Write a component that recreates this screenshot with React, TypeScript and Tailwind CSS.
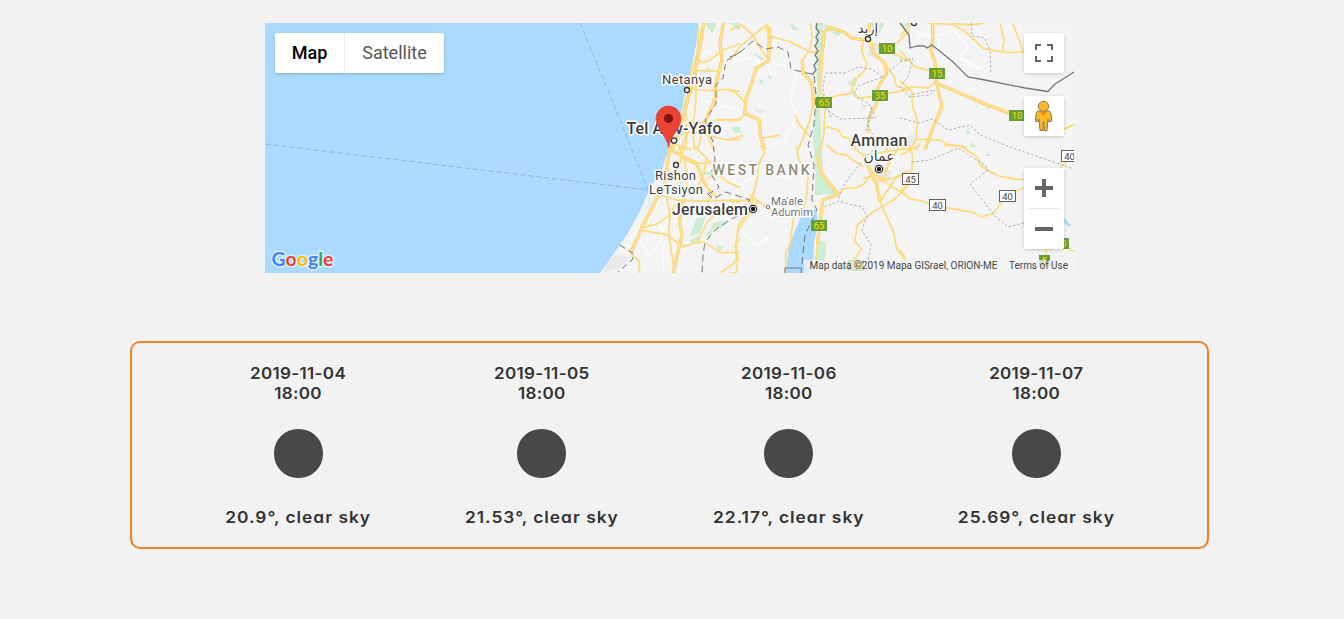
import React from "react";

const roadPaths = {
  nw: [
    "M432 0L425 60L408 130L400 200L378 250L362 300L352 350L336 390",
    "M416 20L412 100L392 160L386 210L372 265",
    "M492 0L482 60L486 110L470 170L468 220L448 280L430 330L412 390",
    "M540 72L492 88L450 120L428 128L412 116",
    "M410 152L470 153 M385 205L440 212L500 208L540 214",
    "M540 298L470 300L430 310L370 300 M350 330L440 345L500 360L540 358",
    "M408 160L408 240L398 330L404 390 M372 265L385 310L376 390 M352 350L400 330L440 300",
    "M432 320L450 360L462 390",
    "M345 372L395 390 M378 310L380 345L360 390 M365 325L430 318",
  ],
  sw: [
    "M330 0L322 60L314 120L290 160L270 200L245 250L212 324",
    "M325 10L370 40L410 60L425 95L440 125L470 155",
    "M355 0L376 60L380 120L362 180L358 230L366 270L352 330L340 384",
    "M300 150L350 165L420 168L500 166L540 172",
    "M245 248L290 238L325 214L345 180",
    "M248 256L320 270L370 305L410 292L430 290L480 322L540 322",
    "M320 160L330 210L326 270L336 330L342 370",
    "M440 40L478 92L510 115L540 128 M400 0L440 40L430 90L412 130",
    "M372 0L360 55 M410 55L470 55 M440 100L490 80 M212 324L238 350L238 384",
    "M470 200L440 235L410 292 M540 280L525 300L535 345L480 384",
    "M440 125L455 150L440 175",
  ],
  mid: [
    "M118 0L108 30L124 50L116 122L78 146L62 200L48 235L44 280L88 300L92 350L105 390",
    "M240 0L247 50L238 92L216 120L220 160L246 190L252 240L240 300L205 390",
    "M285 30L275 110L270 200L285 250L282 340L272 390",
    "M278 38L300 22L345 38L365 55L410 60L470 90L510 110L540 125",
    "M418 0L418 55L430 100L465 130L470 160L445 200L440 250L414 300L416 340",
    "M0 122L30 80L70 46L108 15 M70 46L95 92L116 120 M124 50L180 65L240 96L270 96",
    "M48 250L20 220L0 212 M44 285L25 300L0 302 M196 284L205 310L240 350 M0 358L40 346 M90 356L150 345",
    "M400 62L395 95L410 130L405 150L370 186L364 220L330 225L280 238",
    "M364 205L385 235L440 228L500 215L540 208 M470 140L490 165L500 200L540 208 M500 70L540 30",
    "M288 320L325 330L338 350L370 360L376 390 M0 30L35 15L70 46",
  ],
  midSouth: [
    "M90 0L105 20L85 60L82 100L70 150L62 195L28 235L18 290L20 384L0 384",
    "M200 0L204 40L235 85L230 150L222 190L190 220L180 300L168 320L166 384",
    "M272 0L262 40L278 90L325 148L278 165L272 225L262 300L255 384",
    "M325 148L345 130L380 128L400 118L430 80L460 72",
    "M290 0L320 25L350 30L368 45L400 65 M360 0L400 30L470 20L540 10",
    "M400 30L420 80L440 120L450 170L490 260L500 310L525 345L530 384",
    "M540 115L495 162L430 200L382 240L374 290L395 312L372 345L376 384",
    "M425 90L470 115L540 158 M470 0L475 60L460 105L430 110 M510 0L470 70L440 70 M450 170L500 95L540 75",
    "M400 100L440 90L465 105L540 85 M60 150L100 180L125 195",
    "M0 165L60 168L75 135 M84 165L55 210L20 260",
  ],
  ne: [
    "M0 48L45 0L100 10L160 14L195 34L250 86L320 98L370 96L350 40L338 10",
    "M98 0L98 65L92 90L105 125L110 190L126 260L96 330L75 390",
    "M0 92L45 140L85 152 M110 190L180 220L250 250L330 280L385 290L465 340L522 314",
    "M300 10L312 60L306 98 M160 10L210 15L250 10",
    "M0 212L38 200L85 204L105 185 M0 182L35 212L38 260L52 300L48 360L28 390",
    "M45 358L120 360L150 375L200 382 M60 370L45 390",
  ],
  se: [
    "M30 0L38 35L36 70L30 110L0 140 M0 135L28 160L70 170L110 182L160 192L220 202L245 216L280 205L300 180L325 150L372 128",
    "M130 0L180 2L232 36L240 60L270 80L300 94L345 102L372 104",
    "M480 70L522 25 M465 310L440 310L434 345L420 384 M480 295L522 320",
    "M0 10L40 10 M0 30L20 22L60 0 M0 315L15 335L16 384",
  ],
};

const wide = {
  nw: ["M432 0L420 80L400 180L372 280L336 390", "M492 0L480 70L486 120L466 200L468 230L440 295"],
  sw: ["M330 0L322 60L314 120L290 160L270 200L245 250L212 324", "M325 10L370 35L410 55L425 95L440 125", "M376 130L358 230L366 270L352 330L340 384"],
  mid: ["M285 30L275 110L270 190", "M118 20L116 122L78 146L62 200L48 235L44 280L88 300L92 350L105 390", "M418 0L418 55L430 100L465 130L470 160L445 200L440 250L414 300", "M216 120L220 160L246 190L252 260", "M278 38L300 22L345 38L365 55L410 60"],
  midSouth: ["M262 40L278 90L325 148L278 165L262 300", "M400 30L440 120L450 170"],
  ne: ["M98 0L98 65L92 90L105 125L110 190L126 260L96 330L75 390", "M110 190L180 220L250 250L330 280"],
  se: [] as string[],
};

const tiles = [
  { key: "nw", at: "translate(560 20) scale(.33333)" },
  { key: "sw", at: "translate(560 145) scale(.33333)" },
  { key: "mid", at: "translate(730 20) scale(.33333)" },
  { key: "midSouth", at: "translate(730 145) scale(.33333)" },
  { key: "ne", at: "translate(900 20) scale(.33333)" },
  { key: "se", at: "translate(900 145) scale(.33333)" },
] as const;

function Shield({ x, y, w = 16, n, green = false }: { x: number; y: number; w?: number; n: string; green?: boolean }) {
  return (
    <g>
      <rect
        x={green ? x : x + 0.5}
        y={green ? y : y + 0.5}
        width={w}
        height={11}
        fill={green ? "#689f38" : "#fff"}
        stroke={green ? "none" : "#5f5f5f"}
      />
      <text
        x={x + w / 2 + (green ? 0 : 0.5)}
        y={y + (green ? 9 : 9.5)}
        textAnchor="middle"
        fontSize="9.5"
        fill={green ? "#ffe000" : "#444"}
      >
        {n}
      </text>
    </g>
  );
}

function Terrain() {
  return (
    <svg viewBox="265 23 809 250" width="809" height="250" className="block" fontFamily='Roboto, "Noto Sans", sans-serif'>
      <rect x="265" y="23" width="809" height="250" fill="#aadaff" />
      <path d="M698.5 23L696 45L691 70L687 85L682.5 107L676 130L668 150L662 170L655 180L648 193L641.5 208L628 233L615 252L600 273H1074V23Z" fill="#f4f4f4" />
      <path d="M600 273L614 254L630 257L620 268L603 273Z M650 195L652 203L645 211Z M872 45L882 48L878 58L866 55Z M872 160L892 172L888 182L876 180Z M902 142L914 132L916 140L906 148Z M753 107L768 112L757 113Z" fill="#e9e9e9" />
      <g fill="#cdeed2">
        <path d="M704 23H717L712 33Z M708 66L711 72L705 72Z M729 23H740V31Z M731 127L739 126L742 133H734Z M752 53L764 58L762 61Z M758 82L763 78V85Z M768 75L773 77L769 80Z M815 23H823L822 70L820 110L823 165L816 180L813 140L817 85Z" />
        <path d="M823 23L843 31L838 36L826 29Z M846 84L857 76L856 86Z M861 103L867 106L863 109Z M816 145L823 175L837 194L815 195Z M818 240L826 242L825 262L814 266Z M900 23H911L905 30Z M871 23H885L876 40Z" />
        <path d="M696 219L706 215L700 233L690 237Z M712 223L727 220L722 228L711 229Z M706 234L713 228L710 240Z M688 241L701 235L699 245Z M716 245L724 246L719 252Z M736 258L741 262L733 261Z M704 172H714V175H704Z M984 105L990 104L988 110Z M968 127L970 135L966 134Z M972 142L977 147H970Z M790 23L800 29L793 31Z M962 145L967 147H961Z" />
      </g>
      <path d="M802 214L816 209L818 222L814 243L813 273H786L789 245Z M1064 218L1071 225L1069 227L1062 221Z M988 153L990 156H986Z" fill="#aadaff" />
      <g fill="none" stroke="#fff" strokeWidth="1.2">
        <path d="M731 62L750 58L768 65L772 77 M782 35L768 50L775 63L797 69L790 100L797 115L785 140L760 148 M915 35L930 38L954 30L968 47L960 58L980 68L990 52 M940 52L960 64L979 69 M905 27L940 40L938 62 M651 223L665 220L690 225 M638 239L650 255L660 240L670 210 M661 225L664 273 M722 178L740 185L765 170L790 180 M740 230L758 246L770 235 M698 100L740 110 M690 130L735 125 M700 50L727 60" />
      </g>
      {tiles.map((tile) => (
        <g key={tile.key} transform={tile.at} fill="none" strokeLinejoin="round">
          {roadPaths[tile.key].map((d) => (
            <path key={d} d={d} stroke="#fddc80" strokeWidth="5.4" />
          ))}
          {wide[tile.key].map((d) => (
            <path key={d} d={d} stroke="#f9d16b" strokeWidth="10" />
          ))}
          {wide[tile.key].map((d) => (
            <path key={`${d}-core`} d={d} stroke="#ffe394" strokeWidth="5" />
          ))}
        </g>
      ))}
      <g fill="none" stroke="#75777b">
        <path d="M580 23L612 100L648 190L265 144" stroke="#80b4ec" strokeWidth=".9" strokeDasharray="5 3" />
        <path d="M740 52L726 61L723 78L716 85L716 104L705 120L713 142L715 160L711 174L719 187L707 195 M620 245L634 254L632 260L618 272" strokeDasharray="6 4" />
        <path d="M730 57L738 54L753 41L765 49L778 47L788 52L791 69L806 73L814 74L816 96L814 125L808 145L814 165L812 200L817 210L805 235L801 273" strokeDasharray="7 4" />
        <path d="M740 209L750 200L726 192L713 199L707 193 M748 212L733 218L715 230L705 242L703 255L702 273" strokeDasharray="7 4" />
        <path d="M817 23L816 28L819 32L816 37L818 41L815 46L818 51L815 55L818 60L814 65L816 70L812 75" strokeWidth="1.3" />
        <path d="M900 23L909 35L910 48L917 46L924 46L927 48L932 45L952 61L968 77L985 80L1025 88L1048 91.5L1055 84L1074 72" strokeWidth="1.3" />
        <path d="M785 273V268H801" />
      </g>
      <g fill="none" stroke="#aeb1b2" strokeDasharray="2.5 2">
        <path d="M831 117L825 103L823 85L826 73L845 73L858 67L871 69L883 77L858 86L853 95L869 104L876 118L840 119L825 108 M883 77L900 62L913 58L908 77L900 87L910 97L930 95L935 90L910 95 M866 131L872 106L868 128L880 143L860 164L850 176L841 190L838 202L823 207 M841 202L862 207L867 216L862 230L871 245L866 270" />
        <path d="M900 118L920 123L932 119L948 130L970 125L980 135L1010 147L1074 169 M988 170L970 184L995 216L1008 227L1024 223 M912 162L930 160L958 148L985 165L988 170 M971 23L972 36L985 38L990 52L991 72 M900 60L908 61" />
      </g>
      <g fontSize="14" textAnchor="middle" stroke="#fff" strokeWidth="3" strokeLinejoin="round" paintOrder="stroke" fill="#3c3c3c">
        <text x="687" y="84" fontSize="13" textLength="50">Netanya</text>
        <text x="674" y="134" fontSize="16" fontWeight="500" textLength="95">Tel Aviv-Yafo</text>
        <text x="675.5" y="180" fontSize="13" textLength="41">Rishon</text>
        <text x="676" y="194" fontSize="13" textLength="54">LeTsiyon</text>
        <text x="710" y="215" fontSize="16" fontWeight="500" textLength="76">Jerusalem</text>
        <text x="879" y="146" fontSize="16" fontWeight="500" textLength="57">Amman</text>
        <text x="879" y="161" fontSize="14" fontFamily='"DejaVu Sans", sans-serif'>عمان</text>
        <text x="868" y="33" fontSize="13" fontFamily='"DejaVu Sans", sans-serif'>إربد</text>
        <text x="761" y="175" fontSize="14" fontWeight="500" fill="#918875" textLength="97">WEST BANK</text>
        <text x="787" y="205" fontSize="11.5" fill="#6b6b6b" textLength="32">Ma'ale</text>
        <text x="792" y="216" fontSize="11.5" fill="#6b6b6b" textLength="42">Adumim</text>
      </g>
      <g fill="#fff" stroke="#333" strokeWidth="1.3">
        <circle cx="687" cy="90" r="2.5" />
        <circle cx="674" cy="140.5" r="2.7" />
        <circle cx="676" cy="165" r="2.5" />
        <circle cx="868" cy="39" r="2.5" />
        <circle cx="914" cy="23" r="2.5" />
        <circle cx="768" cy="207" r="1.7" stroke="#777" strokeWidth="1" />
        <circle cx="753" cy="209" r="3.6" />
        <circle cx="879" cy="169" r="3.6" />
      </g>
      <circle cx="753" cy="209" r="2.2" fill="#111" />
      <circle cx="879" cy="169" r="2.2" fill="#111" />
      <Shield x={879} y={43} n="10" green />
      <Shield x={929} y={68} n="15" green />
      <Shield x={872} y={90} n="35" green />
      <Shield x={816} y={97} n="65" green />
      <Shield x={811} y={220} n="65" green />
      <Shield x={1009} y={110} n="10" green />
      <Shield x={1053} y={238} n="10" green />
      <Shield x={1039} y={255} w={11} n="5" green />
      <Shield x={848} y={260} n="65" green />
      <Shield x={902} y={173} n="45" />
      <Shield x={929} y={199} n="40" />
      <Shield x={999} y={190} n="40" />
      <Shield x={1061} y={150} n="40" />
      <path d="M668.5 147.5C667.5 136 656 130 656 118.5A12.5 12.5 0 0 1 681 118.5C681 130 669.5 136 668.5 147.5Z" fill="#ea4335" stroke="#d73a2d" strokeWidth=".6" />
      <circle cx="668.5" cy="118.5" r="4.6" fill="#811411" />
      <text x="271.5" y="266" fontSize="19.5" fontWeight="700" fontFamily="Lato, sans-serif" textLength="62" lengthAdjust="spacingAndGlyphs" stroke="#dbeefd" strokeWidth="3" paintOrder="stroke" strokeLinejoin="round">
        <tspan fill="#4285f4">G</tspan>
        <tspan fill="#ea4335">o</tspan>
        <tspan fill="#fbbc05">o</tspan>
        <tspan fill="#4285f4">g</tspan>
        <tspan fill="#34a853">l</tspan>
        <tspan fill="#ea4335">e</tspan>
      </text>
      <path d="M804 260H1074V273H804Z" fill="#f5f5f5" fillOpacity=".75" />
      <g fontSize="10" fill="#444">
        <text x="809.5" y="269" textLength="188" lengthAdjust="spacingAndGlyphs">Map data ©2019 Mapa GISrael, ORION-ME</text>
        <text x="1009" y="269" textLength="59" lengthAdjust="spacingAndGlyphs">Terms of Use</text>
      </g>
    </svg>
  );
}

const control = "flex w-10 items-center justify-center rounded-[2px] bg-white shadow-[0_1px_4px_-1px_rgba(0,0,0,0.3)]";

function MapControls() {
  return (
    <>
      <div className="absolute top-[10px] left-[10px] flex h-10 rounded-[2px] bg-white font-[Roboto] text-[18px] leading-10 shadow-[0_1px_4px_-1px_rgba(0,0,0,0.3)]">
        <button className="w-[70px] border-r border-[#ececec] text-center font-medium text-black">Map</button>
        <button className="w-[99px] text-center text-[#565656]">Satellite</button>
      </div>
      <div className="absolute top-[10px] right-[10px] flex flex-col">
        <button className={`${control} h-10`} aria-label="Toggle fullscreen">
          <svg width="18" height="18" viewBox="0 0 18 18" fill="none" stroke="#666" strokeWidth="2">
            <path d="M1 6V1H6 M12 1H17V6 M17 12V17H12 M6 17H1V12" />
          </svg>
        </button>
        <button className={`${control} mt-[23px] h-10`} aria-label="Street View">
          <svg width="18" height="32" viewBox="0.5 0 18 32" fill="#fbb829" stroke="#7d6c48" strokeWidth=".9">
            <path d="M4 11H14Q16 11 16.3 13L17.3 21L14.5 22L13.5 19L12.5 30.5H9.5V22H8.5V30.5H5.5L4.5 19L3.5 22L.8 21L1.8 13Q2 11 4 11Z" />
            <circle cx="9" cy="6.3" r="5.1" />
            <path d="M6 11.5H12L9 16.5Z" fill="#e98325" stroke="none" />
          </svg>
        </button>
        <div className={`${control} mt-8 h-[81px] flex-col`}>
          <button className="flex h-10 items-center" aria-label="Zoom in">
            <svg width="18" height="18" viewBox="0 0 18 18"><path d="M7 0H11V7H18V11H11V18H7V11H0V7H7Z" fill="#666" /></svg>
          </button>
          <div className="h-px w-[30px] bg-[#e6e6e6]" />
          <button className="flex h-10 items-center" aria-label="Zoom out">
            <svg width="18" height="18" viewBox="0 0 18 18"><path d="M0 7H18V11H0Z" fill="#666" /></svg>
          </button>
        </div>
      </div>
    </>
  );
}

const forecast = [
  { date: "2019-11-04", text: "20.9°, clear sky", width: "w-[145px]" },
  { date: "2019-11-05", text: "21.53°, clear sky", width: "w-[153px]" },
  { date: "2019-11-06", text: "22.17°, clear sky", width: "w-[153px]" },
  { date: "2019-11-07", text: "25.69°, clear sky", width: "w-[154px]" },
];

export default function App() {
  return (
    <main className="flex h-[619px] flex-col bg-[#f2f2f2] pt-[23px]">
      <section className="relative ml-[265px] h-[250px] w-[809px] overflow-hidden">
        <Terrain />
        <MapControls />
      </section>
      <section className="mt-[68px] ml-[130px] flex h-[208px] w-[1079px] justify-evenly rounded-[10px] border-2 border-[#f48120] pt-5 font-[Inter] text-[16px] leading-5 font-semibold text-[#333] [font-feature-settings:'cv11']">
        {forecast.map((day) => (
          <article key={day.date} className={`${day.width} flex flex-col items-center whitespace-nowrap`}>
            <time className="flex scale-x-[1.065] flex-col items-center tracking-[0.3px]">
              <span>{day.date}</span>
              <span>18:00</span>
            </time>
            <span className="mt-[26px] h-[49px] w-[49px] rounded-[24px] bg-[#484849]" />
            <p className="mt-[29px] scale-x-[1.085] tracking-[0.9px]">{day.text}</p>
          </article>
        ))}
      </section>
    </main>
  );
}
